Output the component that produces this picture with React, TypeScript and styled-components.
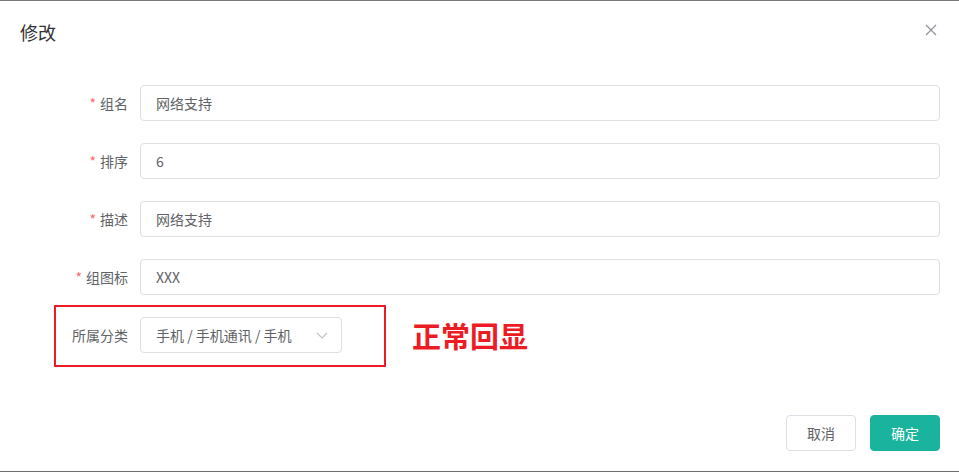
import React from "react";
import styled, { createGlobalStyle } from "styled-components";

const Global = createGlobalStyle`
  html, body { margin: 0; padding: 0; background: #ffffff; }
  body {
    font-family: "Noto Sans CJK SC", "Noto Sans", "Liberation Sans", sans-serif;
    -webkit-font-smoothing: antialiased;
  }
  * { box-sizing: border-box; }
`;

const Dialog = styled.div`
  width: 959px;
  height: 472px;
  display: flex;
  flex-direction: column;
  background: #ffffff;
  border-top: 1px solid #7a7a7a;
  border-bottom: 1px solid #6e6e6e;
`;

const Header = styled.div`
  display: flex;
  align-items: center;
  justify-content: space-between;
  padding: 19px 20px 10px 20px;
`;

const Title = styled.span`
  font-size: 18px;
  line-height: 24px;
  color: #303133;
`;

const CloseButton = styled.button`
  border: none;
  background: transparent;
  padding: 0;
  width: 14px;
  height: 14px;
  display: flex;
  align-items: center;
  justify-content: center;
  cursor: pointer;
  margin-right: 1px;
  margin-top: -4px;
`;

const Body = styled.div`
  padding: 31px 19px 30px 20px;
  display: flex;
  flex-direction: column;
  gap: 22px;
`;

const Row = styled.div`
  position: relative;
  display: flex;
  align-items: center;
`;

const Label = styled.label`
  width: 120px;
  padding-right: 12px;
  text-align: right;
  font-size: 14px;
  line-height: 36px;
  color: #606266;
  flex-shrink: 0;
`;

const Star = styled.span`
  color: #f56c6c;
  margin-right: 4px;
`;

const Input = styled.div`
  flex: 1;
  height: 36px;
  border: 1px solid #dcdfe6;
  border-radius: 4px;
  padding: 0 15px;
  font-size: 14px;
  line-height: 34px;
  color: #606266;
`;

const Select = styled.div`
  width: 202px;
  height: 36px;
  border: 1px solid #dcdfe6;
  border-radius: 4px;
  padding: 0 12px 0 15px;
  font-size: 14px;
  color: #606266;
  display: flex;
  align-items: center;
  justify-content: space-between;
`;

const Highlight = styled.div`
  position: absolute;
  left: 34px;
  top: -12px;
  width: 332px;
  height: 62px;
  border: 2px solid #ed1c24;
  pointer-events: none;
`;

const Note = styled.span`
  margin-left: 70px;
  font-size: 29px;
  font-weight: 700;
  color: #ed1c24;
  line-height: 36px;
`;

const Footer = styled.div`
  display: flex;
  justify-content: flex-end;
  gap: 14px;
  padding: 10px 19px 20px 20px;
  margin-top: auto;
`;

const Button = styled.button<{ $primary?: boolean }>`
  width: 70px;
  height: 36px;
  border-radius: 4px;
  font-family: inherit;
  font-size: 14px;
  border: 1px solid ${(p) => (p.$primary ? "#1ab39e" : "#dcdfe6")};
  background: ${(p) => (p.$primary ? "#1ab39e" : "#ffffff")};
  color: ${(p) => (p.$primary ? "#ffffff" : "#606266")};
  cursor: pointer;
`;

const fields = [
  { label: "组名", value: "网络支持" },
  { label: "排序", value: "6" },
  { label: "描述", value: "网络支持" },
  { label: "组图标", value: "XXX" },
];

export default function App() {
  return (
    <>
      <Global />
      <Dialog>
        <Header>
          <Title>修改</Title>
          <CloseButton aria-label="close">
            <svg width="12" height="12" viewBox="0 0 12 12">
              <path d="M1 1 L11 11 M11 1 L1 11" stroke="#909399" strokeWidth="1.2" />
            </svg>
          </CloseButton>
        </Header>
        <Body>
          {fields.map((f) => (
            <Row key={f.label}>
              <Label>
                <Star>*</Star>
                {f.label}
              </Label>
              <Input>{f.value}</Input>
            </Row>
          ))}
          <Row>
            <Label>所属分类</Label>
            <Select>
              <span>手机 / 手机通讯 / 手机</span>
              <svg width="14" height="14" viewBox="0 0 14 14">
                <path d="M2 5 L7 10 L12 5" fill="none" stroke="#c0c4cc" strokeWidth="1.2" />
              </svg>
            </Select>
            <Note>正常回显</Note>
            <Highlight />
          </Row>
        </Body>
        <Footer>
          <Button>取消</Button>
          <Button $primary>确定</Button>
        </Footer>
      </Dialog>
    </>
  );
}
